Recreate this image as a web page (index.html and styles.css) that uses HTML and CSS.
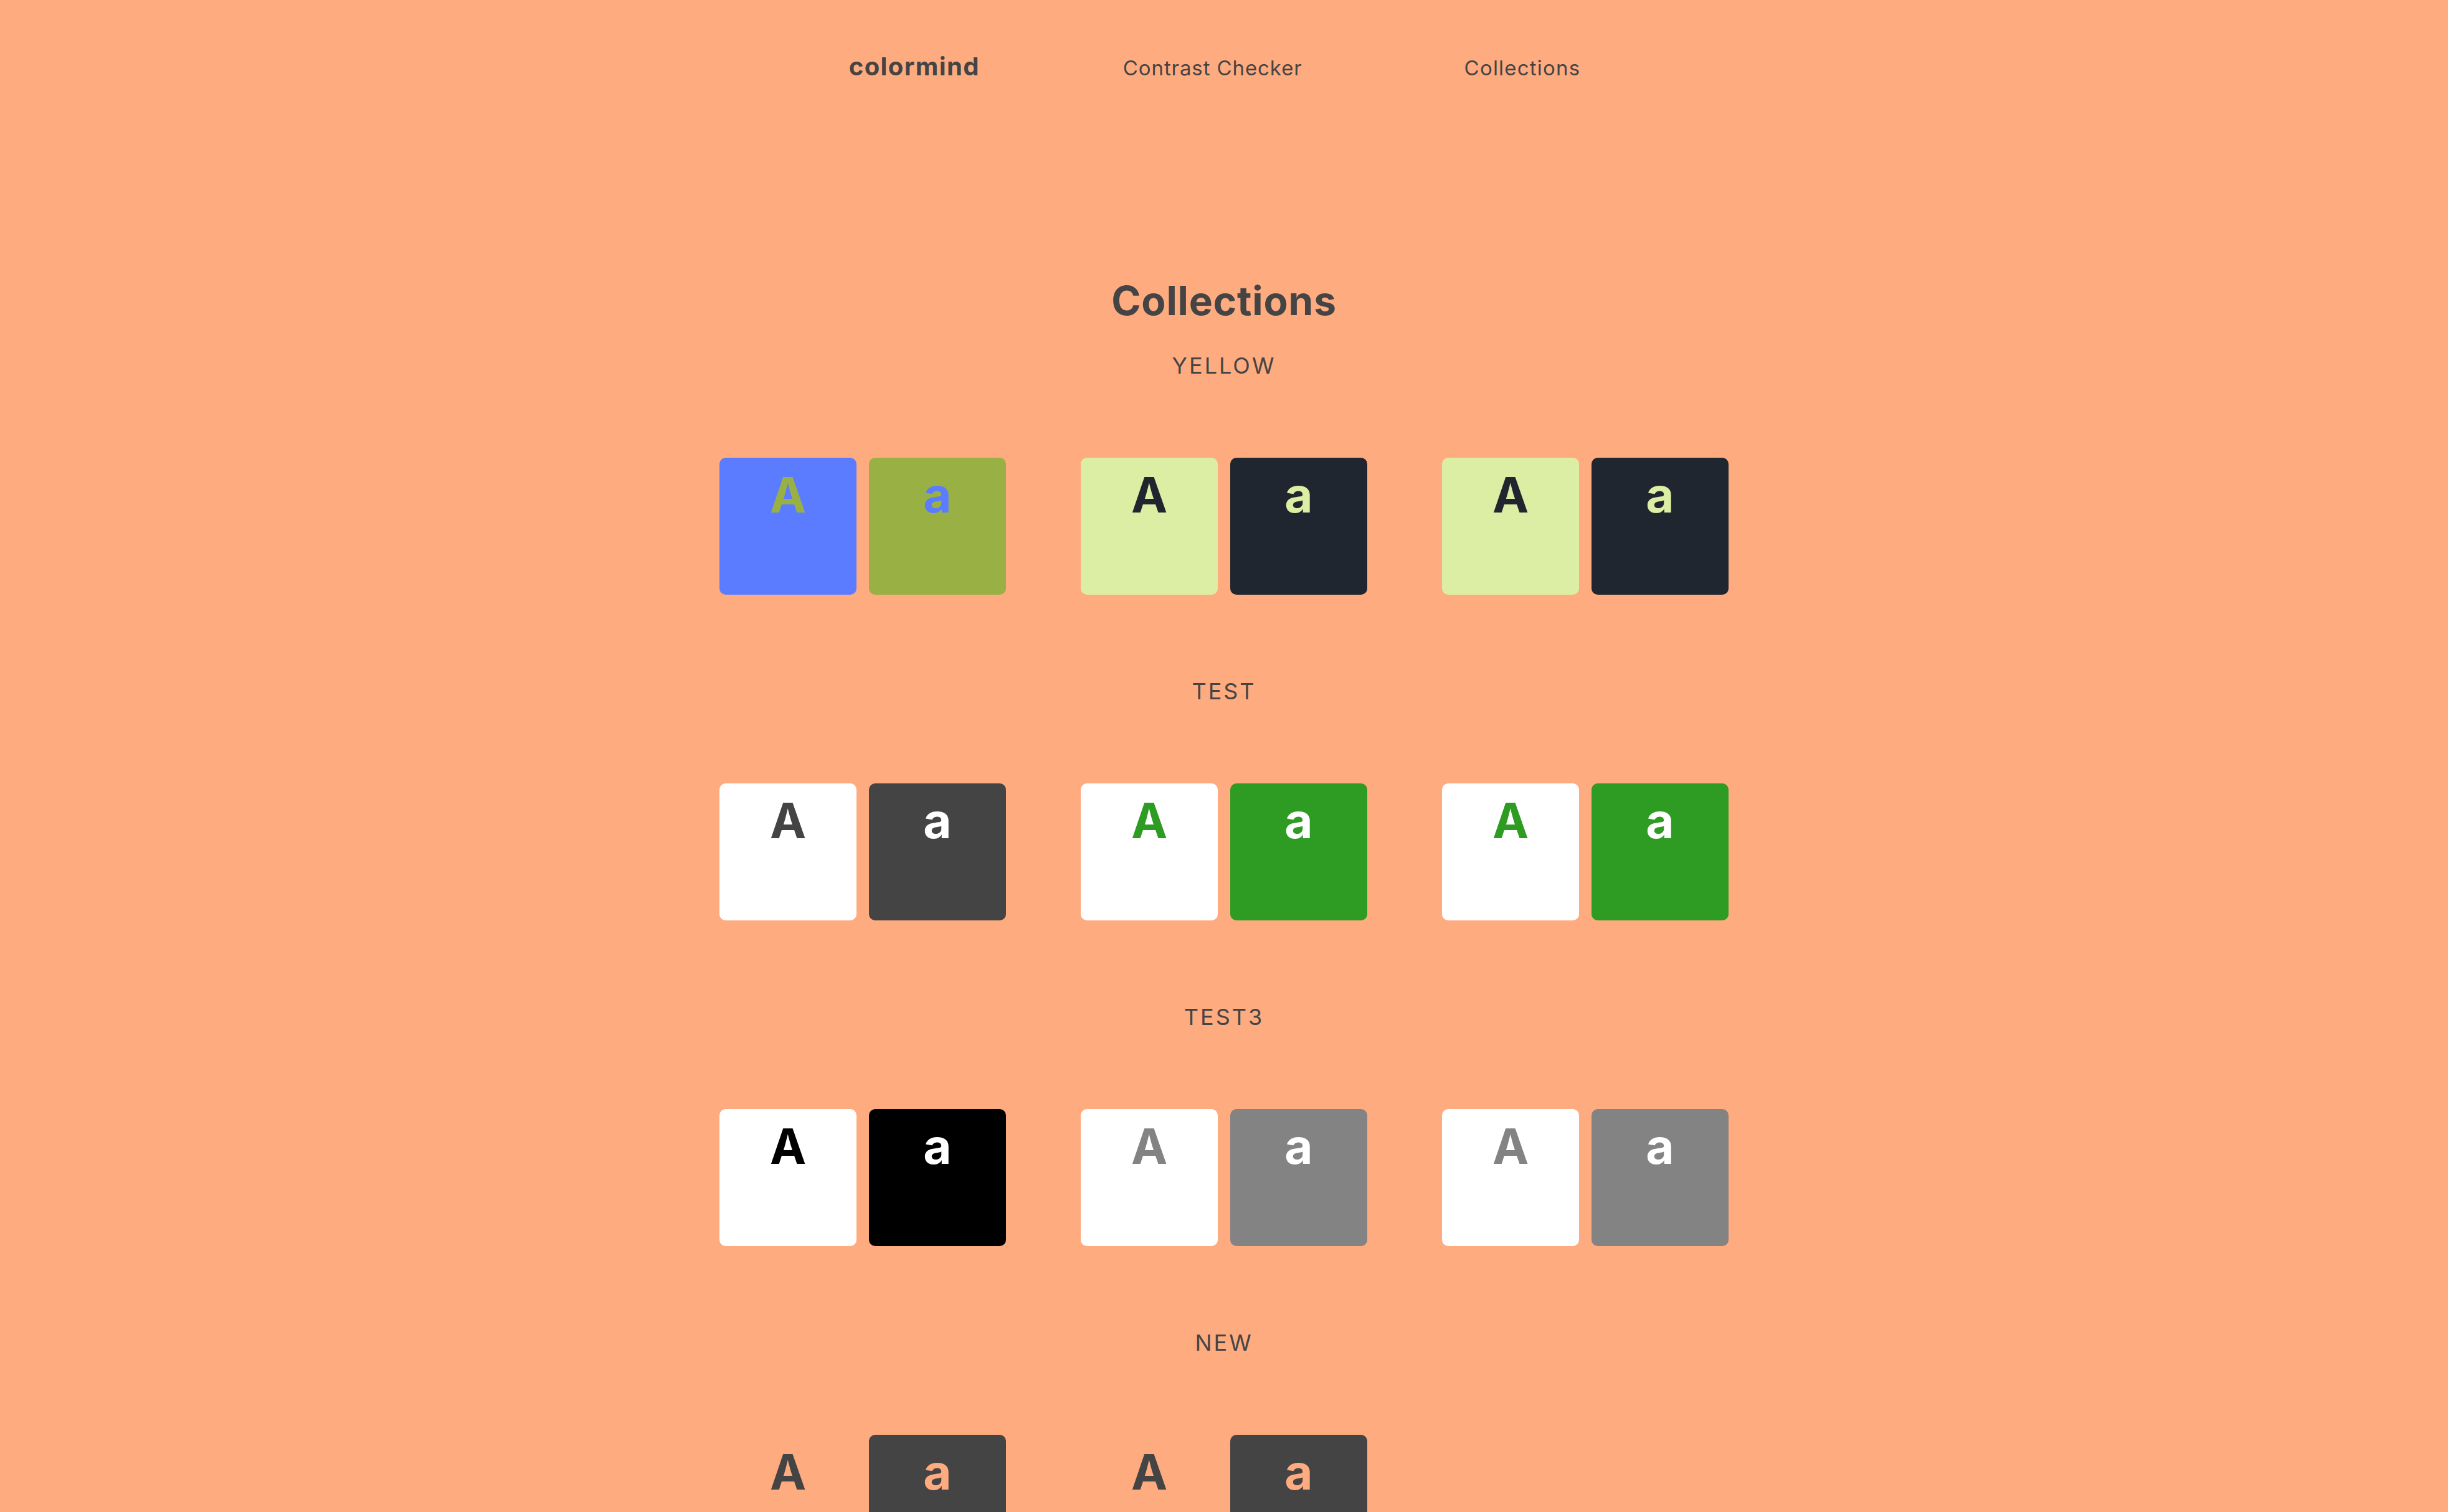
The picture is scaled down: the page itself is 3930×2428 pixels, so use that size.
FILE: index.html
```html
<!DOCTYPE html>
<html lang="en">
<head>
<meta charset="utf-8">
<title>colormind - Collections</title>
<link rel="stylesheet" href="styles.css">
</head>
<body>
<header class="nav">
  <a class="nav-brand" href="#">colormind</a>
  <a class="nav-link nav-link-first" href="#">Contrast Checker</a>
  <a class="nav-link nav-link-last" href="#">Collections</a>
</header>
<main class="main">
  <h1 class="title">Collections</h1>

  <section class="collection">
    <h2 class="label">YELLOW</h2>
    <div class="pairs">
      <div class="pair">
        <div class="swatch c-blue t-olive">A</div>
        <div class="swatch c-olive t-blue">a</div>
      </div>
      <div class="pair">
        <div class="swatch c-lime t-navy">A</div>
        <div class="swatch c-navy t-lime">a</div>
      </div>
      <div class="pair">
        <div class="swatch c-lime t-navy">A</div>
        <div class="swatch c-navy t-lime">a</div>
      </div>
    </div>
  </section>

  <section class="collection">
    <h2 class="label">TEST</h2>
    <div class="pairs">
      <div class="pair">
        <div class="swatch c-white t-dark">A</div>
        <div class="swatch c-dark t-white">a</div>
      </div>
      <div class="pair">
        <div class="swatch c-white t-green">A</div>
        <div class="swatch c-green t-white">a</div>
      </div>
      <div class="pair">
        <div class="swatch c-white t-green">A</div>
        <div class="swatch c-green t-white">a</div>
      </div>
    </div>
  </section>

  <section class="collection">
    <h2 class="label">TEST3</h2>
    <div class="pairs">
      <div class="pair">
        <div class="swatch c-white t-black">A</div>
        <div class="swatch c-black t-white">a</div>
      </div>
      <div class="pair">
        <div class="swatch c-white t-gray">A</div>
        <div class="swatch c-gray t-white">a</div>
      </div>
      <div class="pair">
        <div class="swatch c-white t-gray">A</div>
        <div class="swatch c-gray t-white">a</div>
      </div>
    </div>
  </section>

  <section class="collection">
    <h2 class="label">NEW</h2>
    <div class="pairs">
      <div class="pair">
        <div class="swatch c-clear t-dark">A</div>
        <div class="swatch c-dark t-peach">a</div>
      </div>
      <div class="pair">
        <div class="swatch c-clear t-dark">A</div>
        <div class="swatch c-dark t-peach">a</div>
      </div>
      <div class="pair pair-empty"></div>
    </div>
  </section>
</main>
</body>
</html>
```

FILE: styles.css
```css
html, body {
  margin: 0;
  padding: 0;
}

body {
  background: #ffab80;
  color: #444444;
  font-family: Inter, "Liberation Sans", sans-serif;
}

.nav {
  display: flex;
  justify-content: center;
  align-items: baseline;
  padding-top: 87px;
  padding-right: 30px;
}

.nav a {
  color: #444444;
  text-decoration: none;
  line-height: 1;
}

.nav-brand {
  font-size: 40px;
  font-weight: 700;
  letter-spacing: 1.4px;
}

.nav-link {
  font-size: 33px;
  letter-spacing: 0.9px;
}

.nav-link-last {
  letter-spacing: 1.2px;
}

.nav-link-first {
  margin-left: 230px;
  margin-right: 260px;
}

.main {
  display: flex;
  flex-direction: column;
  align-items: center;
  padding-top: 324px;
}

.title {
  margin: 0;
  font-size: 64px;
  font-weight: 700;
  line-height: 1;
  letter-spacing: 0.8px;
}

.collection {
  display: flex;
  flex-direction: column;
  align-items: center;
}

.title + .collection {
  margin-top: 54px;
}

.collection + .collection {
  margin-top: 137px;
}

.label {
  margin: 0;
  font-size: 36px;
  font-weight: 400;
  line-height: 1;
  letter-spacing: 3px;
}

.pairs {
  display: flex;
  gap: 120px;
  margin-top: 130px;
}

.pair {
  display: flex;
  gap: 20px;
  width: 460px;
}

.swatch {
  width: 220px;
  height: 220px;
  box-sizing: border-box;
  border-radius: 10px;
  padding-top: 21px;
  text-align: center;
  font-size: 78px;
  font-weight: 700;
  line-height: 1;
}

.c-blue { background: #5c7cff; }
.c-olive { background: #99b144; }
.c-lime { background: #dceea3; }
.c-navy { background: #1f2630; }
.c-white { background: #ffffff; }
.c-dark { background: #444444; }
.c-green { background: #2e9c22; }
.c-black { background: #000000; }
.c-gray { background: #838383; }
.c-clear { background: transparent; }

.t-blue { color: #5c7cff; }
.t-olive { color: #99b144; }
.t-lime { color: #dceea3; }
.t-navy { color: #1f2630; }
.t-white { color: #ffffff; }
.t-dark { color: #444444; }
.t-green { color: #2e9c22; }
.t-black { color: #000000; }
.t-gray { color: #838383; }
.t-peach { color: #ffab80; }
```
